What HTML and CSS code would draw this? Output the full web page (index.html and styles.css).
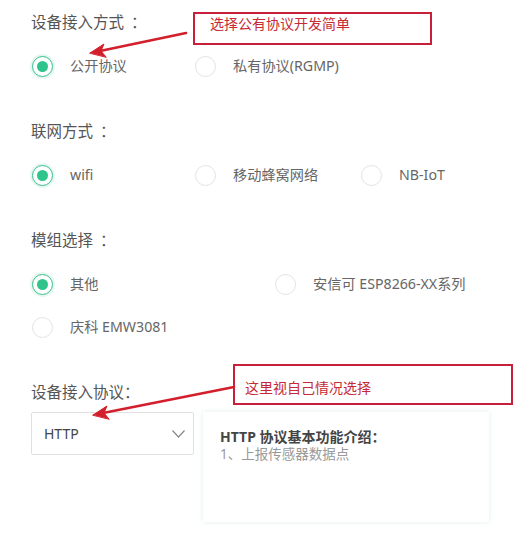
FILE: index.html
```html
<!DOCTYPE html>
<html lang="zh">
<head>
<meta charset="utf-8">
<link rel="stylesheet" href="styles.css">
</head>
<body>
<div class="page">
  <div class="section">
    <div class="label">设备接入方式 <span class="colon">：</span></div>
    <div class="options cols-a">
      <div class="opt"><span class="radio on"></span><span class="text">公开协议</span></div>
      <div class="opt"><span class="radio"></span><span class="text">私有协议(RGMP)</span></div>
    </div>
  </div>
  <div class="section">
    <div class="label">联网方式 <span class="colon">：</span></div>
    <div class="options cols-a">
      <div class="opt"><span class="radio on"></span><span class="text">wifi</span></div>
      <div class="opt"><span class="radio"></span><span class="text">移动蜂窝网络</span></div>
      <div class="opt"><span class="radio"></span><span class="text">NB-IoT</span></div>
    </div>
  </div>
  <div class="section">
    <div class="label">模组选择 <span class="colon">：</span></div>
    <div class="options cols-b">
      <div class="opt"><span class="radio on"></span><span class="text">其他</span></div>
      <div class="opt"><span class="radio"></span><span class="text">安信可 ESP8266-XX系列</span></div>
      <div class="opt"><span class="radio"></span><span class="text">庆科 EMW3081</span></div>
    </div>
  </div>
  <div class="section last">
    <div class="label tight">设备接入协议：</div>
    <div class="proto">
      <div class="select">
        <span>HTTP</span>
        <svg class="chev" width="13" height="8" viewBox="0 0 13 8"><path d="M0.5 0.5 L6.5 7 L12.5 0.5" fill="none" stroke="#8a8a8a" stroke-width="1.2"/></svg>
      </div>
      <div class="card">
        <div class="card-title">HTTP 协议基本功能介绍：</div>
        <div class="card-body">1、上报传感器数据点</div>
      </div>
    </div>
  </div>

  <div class="note note-1">选择公有协议开发简单</div>
  <div class="note note-2">这里视自己情况选择</div>
  <svg class="arrows" width="530" height="547" viewBox="0 0 530 547">
    <g stroke="#d31f2c" stroke-width="2.6" fill="#d31f2c" stroke-linecap="round">
      <line x1="186" y1="33" x2="100" y2="51"/>
      <path d="M90 53 L104 44 L101 51 L106 57 Z" stroke-width="1"/>
      <line x1="234" y1="387" x2="103" y2="413"/>
      <path d="M93 415 L107 406 L104 413 L109 419 Z" stroke-width="1"/>
    </g>
  </svg>
</div>
</body>
</html>
```
FILE: styles.css
```css
* { box-sizing: border-box; }
html, body {
  margin: 0;
  padding: 0;
  background: #fff;
}
body {
  font-family: "Noto Sans", "Noto Sans CJK SC", sans-serif;
  color: #555;
  width: 530px;
  height: 547px;
  overflow: hidden;
}
.page {
  position: relative;
  padding: 12px 0 0 32px;
  height: 547px;
}
.section {
  margin-bottom: 43px;
}
.label {
  font-size: 15.5px;
  line-height: 20px;
  height: 20px;
  color: #555;
  margin-left: -1px;
  margin-bottom: 22px;
}
.colon {
  margin-left: 3px;
}
.label.tight {
  margin-bottom: 10px;
}
.options {
  display: grid;
  row-gap: 19px;
}
.cols-a {
  grid-template-columns: 163px 166px auto;
}
.cols-b {
  grid-template-columns: 243px auto;
}
.opt {
  display: flex;
  align-items: center;
  height: 24px;
}
.radio {
  width: 21px;
  height: 21px;
  border-radius: 50%;
  border: 1px solid #e3e3e3;
  background: #fff;
  flex: none;
  margin-right: 17px;
  position: relative;
}
.radio.on {
  border-color: #35c08c;
  box-shadow: 0 0 0 2px rgba(53, 192, 140, 0.12);
}
.radio.on::after {
  content: "";
  position: absolute;
  left: 4px;
  top: 4px;
  width: 11px;
  height: 11px;
  border-radius: 50%;
  background: #2ec48b;
}
.text {
  font-size: 14.2px;
  color: #666;
  line-height: 20px;
}
.proto {
  display: flex;
  align-items: flex-start;
  gap: 9px;
  margin-left: -1px;
}
.select {
  width: 163px;
  height: 43px;
  border: 1px solid #e0e0e0;
  border-radius: 2px;
  display: flex;
  align-items: center;
  justify-content: space-between;
  padding: 0 8px 0 12px;
  font-size: 14px;
  color: #444;
}
.chev {
  display: block;
  margin-top: 1px;
}
.card {
  width: 286px;
  height: 110px;
  background: #fff;
  box-shadow: 0 0 5px rgba(170, 200, 210, 0.35);
  padding: 16px 17px;
}
.card-title {
  font-size: 14px;
  font-weight: bold;
  color: #444;
  line-height: 18px;
}
.card-body {
  font-size: 13.5px;
  color: #999;
  line-height: 16px;
}
.note {
  position: absolute;
  border: 2px solid #c8203a;
  color: #c62a35;
  font-size: 14px;
  line-height: 18px;
  background: transparent;
}
.note-1 {
  left: 193px;
  top: 12px;
  width: 239px;
  height: 33px;
  padding: 1px 0 0 15px;
}
.note-2 {
  left: 233px;
  top: 364px;
  width: 280px;
  height: 41px;
  padding: 13px 0 0 10px;
}
.arrows {
  position: absolute;
  left: 0;
  top: 0;
  pointer-events: none;
}
```
